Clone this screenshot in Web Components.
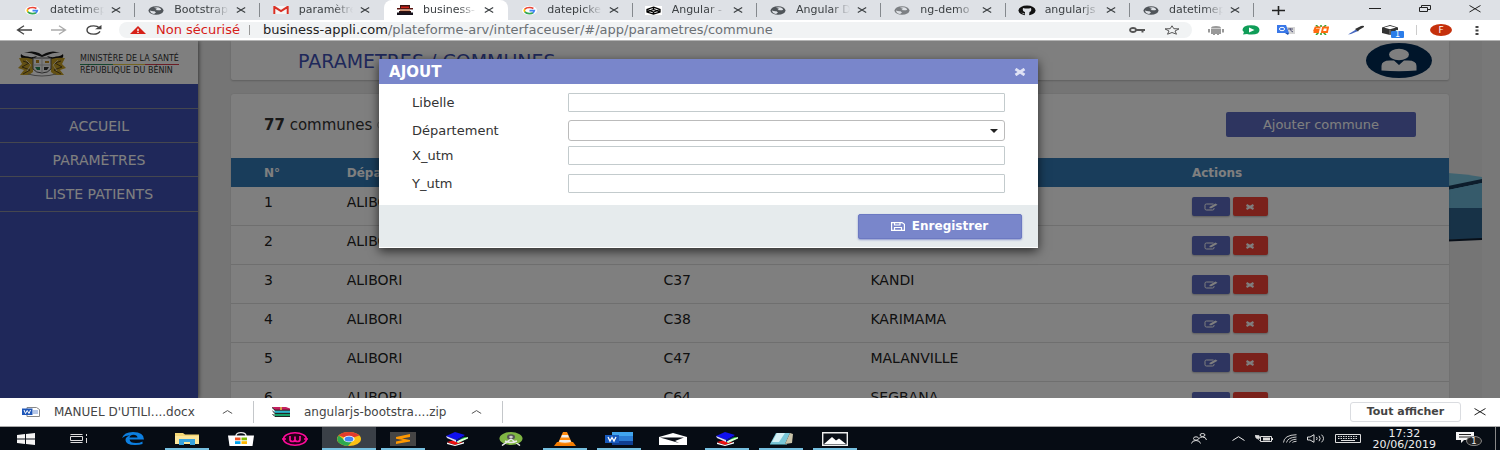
<!DOCTYPE html>
<html lang="fr">
<head>
<meta charset="utf-8">
<title>Communes</title>
<style>
html,body{margin:0;height:100%}
body{font-family:"DejaVu Sans",Verdana,sans-serif;font-size:13px;line-height:16px;overflow:hidden}
</style>
</head>
<body>
<desk-top></desk-top>
<script>
const RESET = `*{box-sizing:border-box}button,input,select{font:inherit;color:inherit;margin:0;padding:0;border:0;background:none}a{color:inherit;text-decoration:none}button{display:grid;place-items:center}`;
function define(tag, css, html){
  const t = document.createElement('template');
  customElements.define(tag, class extends HTMLElement{
    connectedCallback(){
      if(this.shadowRoot) return;
      t.innerHTML = `<style>${RESET}${css}</style>${typeof html==='function'?html(this):html}`;
      this.attachShadow({mode:'open'}).append(t.content.cloneNode(true));
    }
  });
}

/* name: [width, height, markup] */
const globe = c => [16,9,`<ellipse cx="8" cy="4.500" rx="7.500" ry="4.300" fill="${c}"/><path d="M2 4.500Q4 5.500 6.500 5.200L8 6.500 6 8Q2.200 7 2 4.500M6 1.800Q8 .8 11 1.500L13 3Q13.500 4.500 10 4.300L7.500 4 9 2.800Z" fill="#dee1e6"/>`];
const books = [24,14,`<path d="M2 10l8-2 8 2-8 3z" fill="#e11"/><path d="M2 10.500l8 2.500 9-3v1.500l-9 2.500-8-2z" fill="#fff"/><path d="M9 8l11-3 3 1-10 5z" fill="#1c2"/><path d="M11 9l12-4v1.500L13 11z" fill="#dfd"/><path d="M1 4l9-4 10 3-9 5z" fill="#1010f0"/><path d="M1 4l10 4v2L2 6z" fill="#ddf"/><path d="M11 8l8-4v1l-8 5z" fill="#0a0a90"/>`];
const ICONS = {
 google:[15,9,`<ellipse cx="7.500" cy="4.500" rx="7.500" ry="4.500" fill="#fff"/><g fill="none" stroke-width="1.700"><path d="M2.800 3.100Q4.200 1.500 7.500 1.500 9.800 1.500 11.400 2.500" stroke="#ea4335"/><path d="M2.800 3Q1.800 4.500 2.800 6" stroke="#fbbc05"/><path d="M2.800 5.900Q4.500 7.700 7.500 7.600 9.800 7.500 11 6.700" stroke="#34a853"/><path d="M7.500 4.600H12.300Q12 6 10.800 6.900" stroke="#4285f4"/></g>`],
 globe:globe('#50555a'), globe2:globe('#7d8084'),
 gmail:[16,8,`<path d="M0 0H16V8H0Z" fill="#f5f5f5"/><path d="M1.300 8V.8L8 5 14.700.8V8" fill="none" stroke="#d93025" stroke-width="2"/>`],
 gang:[16,10,`<path d="M3 0H13V3.500H3Z" fill="#3a1512"/><path d="M4 1.500H12V3H4Z" fill="#d02218"/><path d="M0 3H16V4.500H0Z" fill="#5a1510"/><path d="M3 4.500H13V6.500H3Z" fill="#d09070"/><path d="M2 6H14V8H2Z" fill="#301010"/><path d="M0 7.500H16V10H0Z" fill="#16121c"/>`],
 codepen:[17,9,`<path d="M0 0H17V9H0Z" fill="#fff"/><path d="M8.500 1.200L15 3.500V6L8.500 8 2 6V3.500ZM2 3.500L8.500 6 15 3.500M2 6L8.500 3.500 15 6M8.500 1V3.500M8.500 6V8" fill="none" stroke="#000" stroke-width="1.300"/>`],
 github:[18,11,`<ellipse cx="9" cy="5.500" rx="8.500" ry="5" fill="#111"/><path d="M5 3L7 3.500H11L13 3Q14 6 11.500 7L11 11H7V7Q4 6 5 3M3 7.500L6.500 8.500V9.500Z" fill="#dee1e6"/>`],
 close:[10,6,`<path d="M.8.600L9.200 5.400M9.200.600L.8 5.400" stroke="#3c4043" stroke-width="1.200"/>`],
 plus:[13,9,`<path d="M0 4.500H13M6.500 0V9" stroke="#222" stroke-width="1.600"/>`],
 min:[12,7,`<path d="M0 3.500H12" stroke="#222"/>`],
 restore:[12,8,`<path d="M.5 2.500H8.500V6.500H.5ZM2.500 2V.5H11.500V4.500H9" fill="none" stroke="#222"/>`],
 wclose:[12,8,`<path d="M.5.500L11.500 7M11.500.500L.5 7" stroke="#222"/>`],
 back:[16,10,`<path d="M16 5H1.500M8 .8L1.500 5 8 9.200" fill="none" stroke="#444" stroke-width="1.300"/>`],
 fwd:[16,10,`<path d="M0 5H14.500M8 .8L14.500 5 8 9.200" fill="none" stroke="#aaa" stroke-width="1.300"/>`],
 reload:[16,10,`<path d="M13.500 3Q11.500 .9 7.700 .9 1 1 1 5T7.700 9.100Q12.500 9 14 6.300" fill="none" stroke="#444" stroke-width="1.400"/><path d="M15.500 0V4.300H9Z" fill="#444"/>`],
 warn:[16,8,`<path d="M8 0L16 8H0Z" fill="#d62018"/><path d="M8 2.800V5.200M8 6V7" stroke="#fff" stroke-width="1.400"/>`],
 key:[16,6,`<ellipse cx="4" cy="3" rx="3" ry="2" fill="none" stroke="#555" stroke-width="1.800"/><path d="M7 3H16M13.500 3V5.500" stroke="#555" stroke-width="2"/>`],
 star:[16,10,`<path d="M8 .8L9.800 3.700 15 3.900 11 6 12.500 9.200 8 7.500 3.500 9.200 5 6 1 3.900 6.200 3.700Z" fill="none" stroke="#555"/>`],
 android:[18,10,`<path d="M4 4H14V9H4ZM1 4H3V7.500H1ZM15 4H17V7.500H15ZM4 3.400Q4 1 9 1T14 3.400ZM6 9H8V10H6ZM10 9H12V10H10Z" fill="#999"/>`],
 play:[18,10,`<path d="M9 .3Q17.500.3 17.500 5T9 9.500Q7 9.500 5 9L1 9.500 2 7Q.5 6 .5 5 .5.300 9 .300" fill="#0f9d58"/><path d="M7 2.500L12.500 5 7 7.500Z" fill="#fff"/>`],
 translate:[18,10,`<path d="M7 2H18V9H9Z" fill="#d5d5d5"/><path d="M0 0H9L12 8H0Z" fill="#3a78e8"/><ellipse cx="5" cy="4" rx="2.600" ry="1.700" fill="none" stroke="#fff"/><path d="M11 4H16M13 3Q13 6 16 7" stroke="#557" fill="none"/><path d="M8 8H12L11 10Z" fill="#1a50b0"/>`],
 so:[16,10,`<path d="M3 0L5.500 2.500M8 0V2M13 0L10.500 2.500M3 10L5.500 7.500M8 10V8M13 10L10.500 7.500" stroke="#3aa030" stroke-width="1.600"/><path d="M7.500 2.500H2.500L1.500 5H5.500L5 7H0.500M10 2.500H15L14 7H9Z" fill="none" stroke="#ff6a10" stroke-width="1.900"/>`],
 pen:[18,10,`<path d="M1 9.500L9 4.500 11 6 4 9Z" fill="#4668c0"/><path d="M8 4L14 1Q17.500 0 17 2L12 5 11 6.500Z" fill="#333"/>`],
 box:[18,10,`<path d="M0 2.500L8 0 16 2.500V8L8 10 0 8Z" fill="#333"/><path d="M2 2.600L8 1 14 2.600 8 4.200Z" fill="#fff"/><path d="M8 5V10" stroke="#888"/>`],
 dots:[4,9,`<path d="M.5 0H3.500V2H.5ZM.5 3.500H3.500V5.500H.5ZM.5 7H3.500V9H.5Z" fill="#444"/>`],
 arms:[52,26,`<path d="M5 3Q3 8 11 8.500 19 8.500 21 5 16 7 12 5.500 7 5 5 3M47 3Q49 8 41 8.500 33 8.500 31 5 36 7 40 5.500 45 5 47 3" fill="#111"/><path d="M8 2Q16-1 23 2L26 4 30 2Q37-1 44 2 38 1 33 3.500L26 6 19 3.500Q14 1 8 2" fill="#1a1a1a"/><g fill="#c9a227"><path d="M3 7Q9 6 17 8V21L13 24H4L8 19 2 17 6 13Z"/><path d="M49 7Q43 6 35 8V21L39 24H48L44 19 50 17 46 13Z"/></g><path d="M7 10L13 12 6 16 14 19 7 23M45 10L39 12 46 16 38 19 45 23" fill="none" stroke="#5a471c"/><path d="M10 9L15 14 11 20M42 9L37 14 41 20" fill="none" stroke="#e8d9a8"/><path d="M17 7H35V18Q32 22 26 22T17 18Z" fill="#f8f8f8" stroke="#555"/><path d="M26 7V22M17 14H35" stroke="#bbb"/><path d="M20 12V9H23V12ZM29 10H33V12H29Z" fill="#be8b20"/><path d="M19 16H24V19H21Z" fill="#2b8a57"/><path d="M28 16H33L31 19H28Z" fill="#333"/><path d="M12 23Q26 27 40 23" stroke="#888" fill="none" stroke-width="1.200"/>`],
 avatar:[66,35,`<ellipse cx="33" cy="17.500" rx="33" ry="17.500" fill="#002a55"/><ellipse cx="33" cy="11.500" rx="10" ry="5.800" fill="#fff"/><path d="M15.500 27.500V23Q15.500 17.500 24 17.500H28L33 22 38 17.500H42Q50.500 17.500 50.500 23V27.500Q33 29 15.500 27.500" fill="#fff"/>`],
 edit:[14,8,`<path d="M9.500 1H2.500Q1 1 1 2.200V5.800Q1 7 2.500 7H8.500Q10 7 10 5.800V5" fill="none" stroke="#fff"/><path d="M5.500 4L11.500.500 13.500 1.700 7.500 5.200H5.500Z" fill="#fff"/>`],
 cross:[10,6,`<path d="M1.500 1L8.500 5M8.500 1L1.500 5" stroke="#fff" stroke-width="2.200"/>`],
 mcross:[12,8,`<path d="M1.500 1L10.500 7M10.500 1L1.500 7" stroke="#dfe2f5" stroke-width="2.800"/>`],
 save:[14,9,`<path d="M.6.600H11L13.400 2.300V8.400H.6ZM3.500 .6V3H9V.6M3.500 8.400V5.500H10.500V8.400" fill="none" stroke="#fff" stroke-width="1.200"/>`],
 word:[18,10,`<path d="M5 .5H14.500L17.500 2.500V9.500H5Z" fill="#fff" stroke="#888"/><path d="M11 4H16M11 6H16" stroke="#6c8fd0"/><path d="M0 1.500H10.500V8H0Z" fill="#1f57b8"/><path d="M2 3L3.500 6.500 5.200 3.500 7 6.500 8.500 3" fill="none" stroke="#fff"/>`],
 rar:[18,10,`<path d="M0 0H14L18 1.500V3H3Z" fill="#c5205f"/><path d="M2 3.500H18V6H3Z" fill="#2bb3c8"/><path d="M2 6.800H18V9.300H3Z" fill="#16a068"/><path d="M0 .5L3 3.200H18M.5 4L3 6.400H18M.5 7L3 9.600H18" stroke="#111" fill="none"/><path d="M9 0V3" stroke="#e3c440" stroke-width="1.500"/>`],
 up:[11,4,`<path d="M.8 3.500L5.500.600 10.200 3.500" fill="none" stroke="#555"/>`],
 win:[18,12,`<path d="M0 2L8 1V5.600H0ZM9 .9L18 0V5.600H9ZM0 6.400H8V11L0 10ZM9 6.400H18V12L9 11.100Z" fill="#f4f4f4"/>`],
 task:[18,11,`<path d="M.5 3.500H12.500V7.500H.5ZM.5 1.500H12.500M.5 9.500H12.500M16.500 1V3M16.500 5V10" fill="none" stroke="#ddd"/>`],
 edge:[22,13,`<path d="M0 6Q2 0 11 0 22 0 22 7.500H7.500Q8 11 14 11 18 11 20.500 9.500V12Q17.500 13 13 13 3.500 13 3.500 8 3.500 5 8 3.300 3 3.500 0 6M7.500 5.500H15.500Q15 2.700 11.500 2.700 8 2.700 7.500 5.500" fill="#0c7fe0"/>`],
 folder:[24,13,`<path d="M0 1H8L10 2.500H24V12H0Z" fill="#f5d876"/><path d="M0 4H24V12H0Z" fill="#fce79c"/><path d="M4 7H20V13H15V10H9V13H4Z" fill="#38a5e0"/>`],
 store:[26,14,`<path d="M8 4Q8 .7 13 .7T18 4" fill="none" stroke="#eee" stroke-width="1.300"/><path d="M0 3.500H26L24.500 14H1.500Z" fill="#fff"/><path d="M7 5.500H12.500V8.300H7Z" fill="#f25022"/><path d="M13.500 5.500H19V8.300H13.500Z" fill="#7fba00"/><path d="M7 9.200H12.500V12H7Z" fill="#00a4ef"/><path d="M13.500 9.200H19V12H13.500Z" fill="#ffb900"/>`],
 wamp:[26,14,`<ellipse cx="13" cy="7" rx="11.500" ry="6.200" fill="#260018" stroke="#ff0b9b" stroke-width="1.600"/><path d="M8 4V7.500Q8 9.500 10.500 9.500T13 7.500V4.500M13 7.500Q13 9.500 15.500 9.500T18 7.500V4M0 7H4M22 7H26" fill="none" stroke="#ff0b9b" stroke-width="1.700"/>`],
 chrome:[24,14,`<ellipse cx="12" cy="7" rx="12" ry="7" fill="#fbc116"/><path d="M12 7L1.700 3.400Q5 0 12 0T22.400 3.500Z" fill="#e33b2e"/><path d="M1.700 3.400Q-2 8 3 11.600 6 13.700 11 14L15.500 9 8 8.500Z" fill="#2da94f"/><ellipse cx="12" cy="7" rx="5.600" ry="3.300" fill="#fff"/><ellipse cx="12" cy="7" rx="4.400" ry="2.600" fill="#4285f4"/>`],
 sublime:[26,14,`<path d="M0 0H26V14H0Z" fill="#454545"/><path d="M6 5L20 2V5L12 6.500 20 8V9.500L6 12V9.500L13 8 6 6.800Z" fill="#ff9800"/>`],
 books,
 studio:[24,14,`<ellipse cx="12" cy="6.500" rx="11.500" ry="6.500" fill="#7fb543"/><ellipse cx="12" cy="5" rx="4" ry="2.800" fill="#555"/><ellipse cx="12" cy="5" rx="1.800" ry="1.200" fill="#ccc"/><path d="M12 7L3 13.500M12 7L21 13.500M6 9Q12 12 18 9" fill="none" stroke="#e8e8e8" stroke-width="1.500"/>`],
 vlc:[22,14,`<path d="M3 10H19L22 14H0Z" fill="#f57c00"/><path d="M9 0H13L18 11Q11 13 4 11Z" fill="#ff8b10"/><path d="M8 3H14L15 5.500H7ZM5.800 8H16.200L17 10Q11 11.500 5 10Z" fill="#eee"/>`],
 wordapp:[28,13,`<path d="M7 0H28V13H7Z" fill="#2b7cd3"/><path d="M7 0H28V4H7Z" fill="#41a5ee"/><path d="M7 9H28V13H7Z" fill="#103f91"/><path d="M0 3H14V11H0Z" fill="#185abd"/><path d="M3 5L5 9 7 5.500 9 9 11 5" fill="none" stroke="#fff" stroke-width="1.300"/>`],
 mail:[28,12,`<path d="M0 4L14 0 28 4V12H0Z" fill="#fff"/><path d="M1 4.500L25 4.500 16 8 20 10Z" fill="#0b1018"/>`],
 notes:[24,13,`<path d="M7 1H21L16 12H1Z" fill="#79c6d6"/><path d="M8 1H16L10 10H3Z" fill="#d4f0f4"/><path d="M21 1L24 2 23 11 16 12Z" fill="#c9c3a8"/><path d="M1 12H18V13H1Z" fill="#38707c"/>`],
 photo:[26,14,`<path d="M.7.700H25.300V13.300H.7Z" fill="#0b1018" stroke="#eee" stroke-width="1.400"/><path d="M2 12L10 5 14 8.500 17 6.500 24 12Z" fill="#fff"/>`],
 people:[16,11,`<g fill="none" stroke="#ddd"><ellipse cx="5" cy="5.500" rx="2.500" ry="1.700"/><path d="M.5 10.500Q1 7.500 5 7.500T9.500 10.500"/><ellipse cx="11.500" cy="2" rx="2.500" ry="1.500"/><path d="M8 5.500Q9 4 11.500 4 15 4 15.500 7"/></g>`],
 tup:[13,5,`<path d="M.5 4.500L6.500.700 12.500 4.500" fill="none" stroke="#eee"/>`],
 batt:[18,8,`<path d="M5.500 1.500H16.500V6.500H5.500ZM17.500 3V5" fill="none" stroke="#ddd"/><path d="M8 2.500H15V5.500H8Z" fill="#ddd"/><path d="M0 0L4 .5 5 3 3 4 1 3ZM3 4L5 6" fill="#ddd" stroke="#ddd" stroke-width=".6"/>`],
 wifi:[14,9,`<g fill="none" stroke="#ccc"><path d="M.5 8.500Q1 1 13.500.700M3.500 8.500Q4.500 3.500 13.500 3M6.500 8.500Q7.500 5.500 13.500 5.200M9.500 8.500Q10 7.500 13.500 7.300"/></g>`],
 sound:[18,9,`<path d="M.5 3H3L7 .7V8.300L3 6H.5ZM9.500 3Q10.700 4.500 9.500 6M12 1.800Q14.300 4.500 12 7.200M14.500.700Q18.500 4.500 14.500 8.300" fill="none" stroke="#ddd"/>`],
 keyb:[26,9,`<path d="M.5.500H25.500V8.500H.5Z" fill="none" stroke="#ddd"/><path d="M3 2.500H23M3 4.500H23" stroke="#ddd" stroke-dasharray="1.500 1"/><path d="M6 6.500H20" stroke="#ddd"/>`],
 notif:[26,15,`<path d="M0 1H18V9H8L5 12V9H0Z" fill="#f5f5f5"/><path d="M3 3.500H15M3 6H15" stroke="#222"/><ellipse cx="18" cy="10" rx="7.500" ry="4.600" fill="#222" stroke="#888"/>`],
 pie:[34,150,`<path d="M0 76Q18 77 34 80V140H0Z" fill="#7fc8e2"/><path d="M0 89L34 82V86L0 93Z" fill="#1a3b58"/><path d="M0 93L34 86V111H0Z" fill="#6cb6d6"/><path d="M0 111H34V142L0 143Z" fill="#2f648e"/><path d="M0 142.500L34 141V143L0 144.500Z" fill="#101e30"/>`]
};
define('ui-icon', `:host{display:block;flex:none;line-height:0}svg{display:block}`, h=>{
  const [w,ht,m] = ICONS[h.getAttribute('name')];
  return `<svg width="${w}" height="${ht}" viewBox="0 0 ${w} ${ht}" aria-hidden="true">${m}</svg>`;
});

define('browser-tab', `
:host{display:flex;align-items:center;flex:1 1 0;min-width:0;height:20px;padding:0 12px;position:relative;font-size:11px;color:#3c4043;border-right:1px solid #85898e}
:host{border-image:linear-gradient(#0000 20%,#85898e 20% 80%,#0000 80%) 1}
:host([plain]){border-color:transparent;border-image:none}
:host([active]){background:#fff;border-radius:8px 8px 0 0}
a{flex:1;min-width:0;display:flex;align-items:center;gap:9px}
.i{width:18px;display:grid;place-items:center}
.t{flex:1;min-width:0;overflow:hidden;white-space:nowrap;-webkit-mask-image:linear-gradient(90deg,#000 65%,transparent)}
button{width:12px;height:14px;margin-left:6px}`,
h=>`<a href="#"><span class="i"><ui-icon name="${h.getAttribute('icon')}"></ui-icon></span><span class="t"><slot></slot></span></a><button aria-label="Fermer l'onglet"><ui-icon name="close"></ui-icon></button>`);

define('tab-strip', `
:host{display:flex;height:20px;background:#dee1e6;padding-left:11px}
nav{display:flex;width:83.5%}
.new{width:48px}.win{display:flex;margin-left:auto}.win button{width:50px;height:17px}`,
`<nav aria-label="Onglets">
<browser-tab icon="google">datetimepicker</browser-tab><browser-tab icon="globe">Bootstrap</browser-tab><browser-tab plain icon="gmail">paramètres</browser-tab><browser-tab plain active icon="gang">business-</browser-tab><browser-tab icon="google">datepicker</browser-tab><browser-tab icon="codepen">Angular - </browser-tab><browser-tab icon="globe">Angular D</browser-tab><browser-tab icon="globe2">ng-demo</browser-tab><browser-tab icon="github">angularjs</browser-tab><browser-tab icon="globe">datetimepicker</browser-tab>
</nav><button class="new" aria-label="Nouvel onglet"><ui-icon name="plus"></ui-icon></button>
<div class="win"><button aria-label="Réduire"><ui-icon name="min"></ui-icon></button><button aria-label="Restaurer"><ui-icon name="restore"></ui-icon></button><button aria-label="Fermer"><ui-icon name="wclose"></ui-icon></button></div>`);

define('address-bar', `
:host{display:flex;align-items:center;height:21px;background:#fff;padding:0 8px 0 6px;border-bottom:1px solid #b4b4b4}
.nav{width:35px;height:18px}
.omni{flex:1;min-width:0;height:16px;margin:0 6px 0 8px;border-radius:8px;background:#f1f3f4;display:flex;align-items:center;padding:0 11px;white-space:nowrap}
.warn{color:#d62018;margin:0 9px 0 10px}.bar{width:1px;height:10px;background:#999;margin-right:13px}
.url{flex:1;color:#6b7074}.url b{font-weight:400;color:#222}
.omni button{width:35px}.omni button:last-child{margin-right:-8px}
.ext{width:35px;height:18px;position:relative}
.badge{position:absolute;left:18px;top:10px;width:13px;height:7px;background:#2b7de9;color:#fff;font-size:8px;line-height:7px;border-radius:1px;text-align:center}
.sep{width:1px;height:10px;background:#ccc;margin:0 13px 0 8px}
.me{width:22px;height:12px;border-radius:50%;background:#c5300c;color:#fff;font-size:9px;line-height:12px;margin-right:10px}
.more{width:30px}`,
`<button class="nav" aria-label="Précédent"><ui-icon name="back"></ui-icon></button><button class="nav" aria-label="Suivant"><ui-icon name="fwd"></ui-icon></button><button class="nav" aria-label="Actualiser"><ui-icon name="reload"></ui-icon></button>
<div class="omni"><ui-icon name="warn"></ui-icon><span class="warn">Non sécurisé</span><span class="bar"></span><span class="url"><b>business-appli.com</b>/plateforme-arv/interfaceuser/#/app/parametres/commune</span><button aria-label="Mot de passe"><ui-icon name="key"></ui-icon></button><button aria-label="Favori"><ui-icon name="star"></ui-icon></button></div>
${['android','play','translate','so','pen'].map(n=>`<button class="ext" aria-label="${n}"><ui-icon name="${n}"></ui-icon></button>`).join('')}<button class="ext" aria-label="box"><ui-icon name="box"></ui-icon><span class="badge">1</span></button>
<span class="sep"></span><button class="me">F</button><button class="more" aria-label="Menu"><ui-icon name="dots"></ui-icon></button>`);

define('side-menu', `
:host{display:block;width:198px;flex:none;background:#3f51b5;color:#fff;box-shadow:1px 0 4px #0008}
.logo{height:43px;background:#fff;display:flex;align-items:center;gap:12px;padding:3px 16px 0;color:#333;font-size:8px;line-height:9px;white-space:nowrap}
.logo i{display:block;height:1px;margin:1px 0;background:linear-gradient(90deg,#2a8a5c 33%,#e8c840 33% 66%,#d43a4a 66%)}
nav{padding-top:24px;font-size:14px}
a{display:grid;place-items:center;height:34px;border-top:1px solid #8a8f9e}
nav a:last-child{height:36px;border-bottom:1px solid #8a8f9e}`,
`<div class="logo"><ui-icon name="arms"></ui-icon><div>MINISTÈRE DE LA SANTÉ<i></i>RÉPUBLIQUE DU BÉNIN</div></div>
<nav><a href="#accueil">ACCUEIL</a><a href="#parametres">PARAMÈTRES</a><a href="#patients">LISTE PATIENTS</a></nav>`);

const ROWS = [['1','ALIBORI','C35','BANIKOARA'],['2','ALIBORI','C36','GOGOUNOU'],['3','ALIBORI','C37','KANDI'],['4','ALIBORI','C38','KARIMAMA'],['5','ALIBORI','C47','MALANVILLE'],['6','ALIBORI','C64','SEGBANA']];
define('commune-table', `
:host{display:block}
table{width:100%;border-collapse:separate;border-spacing:0;table-layout:fixed;color:#222;font-size:14px}
th{height:29px;background:#337ab7;color:#fff;text-align:left;padding:0;font-size:12px;line-height:16px}
td{height:39px;padding:7px 0 0;vertical-align:top;border-bottom:1px solid #dedede}
th:first-child,td:first-child{padding-left:33px}
td.act{padding-top:10px}
.act div{display:flex;gap:3px}
button{width:38px;height:19px;border-radius:2px;background:#5c6bc0;box-shadow:0 1px 2px #0004}
button.del{width:35px;background:#f44336}`,
`<table><colgroup><col style="width:9.500%"><col style="width:26%"><col style="width:17%"><col style="width:26.400%"><col></colgroup>
<thead><tr><th>N°</th><th>Département</th><th>Code</th><th>Libelle</th><th>Actions</th></tr></thead><tbody>
${ROWS.map(r=>`<tr>${r.map(c=>`<td>${c}</td>`).join('')}<td class="act"><div><button aria-label="Modifier"><ui-icon name="edit"></ui-icon></button><button class="del" aria-label="Supprimer"><ui-icon name="cross"></ui-icon></button></div></td></tr>`).join('')}</tbody></table>`);

define('commune-page', `
:host{display:block;flex:1;min-width:0;padding:0 33px;background:#ebebeb;position:relative}
ui-icon.deco{position:absolute;right:0;top:56px}
header{height:39px;background:#fff;border-radius:0 0 2px 2px;box-shadow:0 1px 2px #0003;display:flex;align-items:center;justify-content:space-between;padding:0 17px 0 67px}
h1{margin:0;font-weight:400;font-size:19px;line-height:20px;color:#3f51b5}
section{margin-top:14px;background:#fff;border-radius:3px 3px 0 0;position:relative;box-shadow:0 0 2px #0002}
.top{display:flex;align-items:center;height:64px;padding:0 33px 3px;color:#333;font-size:15px}
.info{width:20px;height:12px;border:1px solid #bbb;border-radius:50%;margin-left:5px}
.add{margin-left:auto;width:190px;height:25px;border-radius:2px;background:#5c6bc0;color:#fff;font-size:13px}`,
`<ui-icon class="deco" name="pie"></ui-icon>
<header><h1>PARAMETRES / COMMUNES</h1><ui-icon name="avatar"></ui-icon></header>
<section><div class="top"><span><b>77</b> communes</span><button class="info" aria-label="Info"></button><button class="add">Ajouter commune</button></div><commune-table></commune-table></section>`);

define('form-row', `
:host{display:grid;grid-template-columns:156px 1fr;align-items:center;color:#333}
input,select{width:100%;height:19px;border:1px solid #c3cbcd;border-radius:1px;background:#fff;display:block;padding:0 8px}
select{height:21px;border-radius:3px;appearance:none;border-color:#bbb}
.f{position:relative}
.f.s::after{content:"";position:absolute;right:7px;top:9px;border:4px solid transparent;border-top:4px solid #222;border-bottom:0}`,
h=>{const l=h.getAttribute('label');return `<label for="f">${l}</label>`+(h.hasAttribute('choice')?`<div class="f s"><select id="f"><option></option></select></div>`:`<div class="f"><input id="f" type="text"></div>`)});

define('add-dialog', `
:host{display:block;position:absolute;inset:0;background:rgba(0,0,0,.5)}
.box{margin:18px 0 0 25.270%;width:43.900%;background:#fff;box-shadow:0 3px 10px #000a;border-bottom:1px solid #fff}
.h{height:25px;background:#7986cb;color:#fff;display:flex;align-items:center;justify-content:space-between;padding:0 12px 0 10px}
h2{margin:0;font-size:15px;line-height:18px}
form{display:grid;padding:9px 33px 12px}
form-row{margin-bottom:8px}form-row[choice]{margin-bottom:5px}form-row:last-child{margin:1px 0 0}
footer{height:42px;background:#e6ebed;display:flex;align-items:center;justify-content:flex-end;padding:0 16px}
.save{width:164px;height:25px;border-radius:2px;background:#7986cb;color:#fff;font-weight:700;font-size:12px;display:flex;align-items:center;justify-content:center;gap:7px;box-shadow:0 1px 2px #3f51b588;border:1px solid #6c79c2}`,
`<div class="box" role="dialog" aria-label="Ajout"><div class="h"><h2>AJOUT</h2><button aria-label="Fermer"><ui-icon name="mcross"></ui-icon></button></div>
<form><form-row label="Libelle"></form-row><form-row choice label="Département"></form-row><form-row label="X_utm"></form-row><form-row label="Y_utm"></form-row></form>
<footer><button class="save"><ui-icon name="save"></ui-icon>Enregistrer</button></footer></div>`);

define('download-shelf', `
:host{display:flex;align-items:center;height:29px;background:#fff;border-bottom:1px solid #aaa;font-size:12px;color:#444;padding-right:11px}
.d{display:flex;flex:none;align-items:center;height:22px;width:249px;padding:0 20px 0 18px;border-right:1px solid #c4c7ca}
.d:first-of-type{width:254px;padding-left:22px}
.d a{flex:1;margin-left:14px;white-space:nowrap}
.all{margin-left:auto;width:111px;height:20px;border:1px solid #dadce0;border-radius:3px;font-size:11px;font-weight:700}
.x{width:18px;height:18px;margin-left:10px}`,
`<div class="d"><ui-icon name="word"></ui-icon><a href="#d1">MANUEL D'UTILI....docx</a><button aria-label="Options"><ui-icon name="up"></ui-icon></button></div>
<div class="d"><ui-icon name="rar"></ui-icon><a href="#d2">angularjs-bootstra....zip</a><button aria-label="Options"><ui-icon name="up"></ui-icon></button></div>
<button class="all">Tout afficher</button><button class="x" aria-label="Fermer"><ui-icon name="wclose"></ui-icon></button>`);

const APPS = [['win'],['task'],['edge'],['folder',1],['store'],['wamp'],['chrome',2],['sublime',1],['books'],['studio'],['vlc',1],['wordapp',1],['mail'],['books',1],['notes',1],['photo',1]];
define('task-bar', `
:host{display:flex;height:23px;background:#060c14;color:#eee;font-size:11px;line-height:11px}
.app{width:54px;height:23px;flex:none}.app:first-of-type{width:52px}
.app.on{background:linear-gradient(#76c0e0,#76c0e0) 50% 100%/44px 2px no-repeat}
.app.act{background:linear-gradient(#76c0e0,#76c0e0) 50% 100%/100% 2px no-repeat,#3a4047}
.tray{margin-left:auto;display:flex;align-items:center}
.tray>ui-icon{margin-right:10px}.tray>.p{margin-right:25px}.tray>.k{margin-right:12px}
time{text-align:center;white-space:nowrap;margin-right:20px}
.n{position:relative;width:26px;height:23px}.n span{position:absolute;left:15px;top:9px;font-size:9px}
.end{width:1px;height:23px;background:#888;margin:0 4px 0 13px}`,
APPS.map(([n,s])=>`<button class="app ${s==2?'act':s?'on':''}" aria-label="${n}"><ui-icon name="${n}"></ui-icon></button>`).join('')+
`<div class="tray"><ui-icon class="p" name="people"></ui-icon><ui-icon name="tup"></ui-icon><ui-icon name="batt"></ui-icon><ui-icon name="wifi"></ui-icon><ui-icon name="sound"></ui-icon><ui-icon class="k" name="keyb"></ui-icon><time>17:32<br>20/06/2019</time><button class="n" aria-label="Notifications"><ui-icon name="notif"></ui-icon><span>1</span></button><span class="end"></span></div>`);

define('desk-top', `
:host{display:flex;flex-direction:column;height:100vh}
main{flex:1;min-height:0;display:flex;position:relative;overflow:hidden;z-index:0}
side-menu{z-index:1}add-dialog{z-index:2}
.scroll{width:18px;background:#f1f1f1}
tab-strip,address-bar,download-shelf,task-bar{flex:none}`,
`<tab-strip></tab-strip><address-bar></address-bar><main><side-menu></side-menu><commune-page></commune-page><div class="scroll"></div><add-dialog></add-dialog></main><download-shelf></download-shelf><task-bar></task-bar>`);
</script>
</body>
</html>
